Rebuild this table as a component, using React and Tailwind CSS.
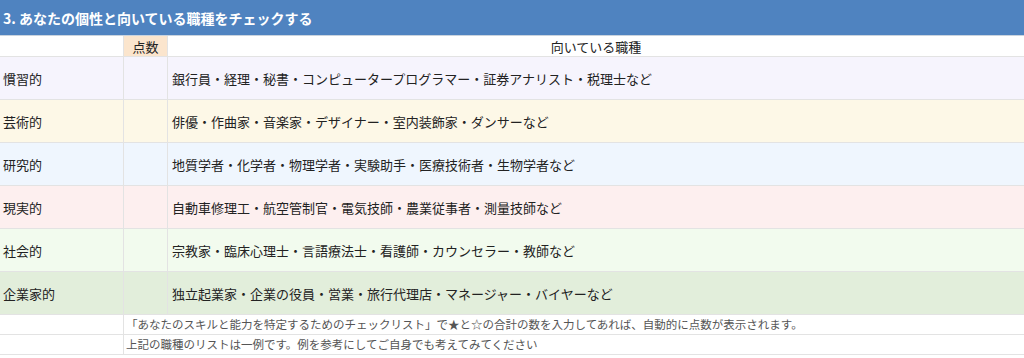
import React from 'react'

const rows = [
  { label: '慣習的', jobs: '銀行員・経理・秘書・コンピュータープログラマー・証券アナリスト・税理士など', bg: 'bg-[#f6f4fd]' },
  { label: '芸術的', jobs: '俳優・作曲家・音楽家・デザイナー・室内装飾家・ダンサーなど', bg: 'bg-[#fdf8e7]' },
  { label: '研究的', jobs: '地質学者・化学者・物理学者・実験助手・医療技術者・生物学者など', bg: 'bg-[#eff6fe]' },
  { label: '現実的', jobs: '自動車修理工・航空管制官・電気技師・農業従事者・測量技師など', bg: 'bg-[#fdefef]' },
  { label: '社会的', jobs: '宗教家・臨床心理士・言語療法士・看護師・カウンセラー・教師など', bg: 'bg-[#f2fbee]' },
  { label: '企業家的', jobs: '独立起業家・企業の役員・営業・旅行代理店・マネージャー・バイヤーなど', bg: 'bg-[#e2eedb]' },
]

const notes = [
  '「あなたのスキルと能力を特定するためのチェックリスト」で★と☆の合計の数を入力してあれば、自動的に点数が表示されます。',
  '上記の職種のリストは一例です。例を参考にしてご自身でも考えてみてください',
]

const App = () => {
  return (
    <div
      className="w-[1024px] h-[358px] bg-white text-[#222] overflow-hidden"
      style={{ fontFamily: '"Noto Sans CJK JP", "Noto Sans", sans-serif' }}
    >
      {/* Title bar */}
      <div className="h-[36px] bg-[#4f83c0] flex items-center pl-[3px] border-b border-[#c9d3de]">
        <h1 className="text-white font-bold text-[14px] leading-none">3. あなたの個性と向いている職種をチェックする</h1>
      </div>

      {/* Column headers */}
      <div className="grid grid-cols-[124px_44px_1fr] h-[21px] border-b border-[#e3e3e3] text-[13px] leading-none">
        <div className="border-r border-[#e3e3e3]" />
        <div className="bg-[#fbe5cd] border-r border-[#e3e3e3] flex items-center justify-center">点数</div>
        <div className="flex items-center justify-center">向いている職種</div>
      </div>

      {/* Rows */}
      {rows.map((row) => (
        <div
          key={row.label}
          className={`grid grid-cols-[124px_44px_1fr] h-[43px] border-b border-[#e3e3e3] text-[13px] leading-none ${row.bg}`}
        >
          <div className="border-r border-[#e3e3e3] flex items-center pl-[3px]">{row.label}</div>
          <div className="border-r border-[#e3e3e3]" />
          <div className="flex items-center pl-[4px]">{row.jobs}</div>
        </div>
      ))}

      {/* Notes */}
      {notes.map((note) => (
        <div key={note} className="grid grid-cols-[124px_1fr] h-[20px] border-b border-[#e3e3e3] text-[11.5px] leading-none text-[#555]">
          <div className="border-r border-[#e3e3e3]" />
          <div className="flex items-center pl-[2px]">{note}</div>
        </div>
      ))}
    </div>
  )
}

export default App
